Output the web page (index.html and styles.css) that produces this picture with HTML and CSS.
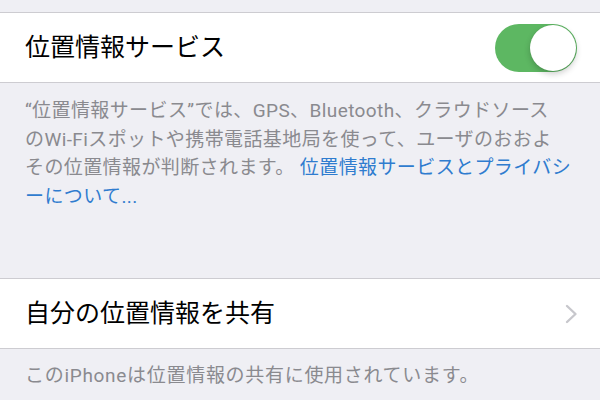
FILE: index.html
```html
<!DOCTYPE html>
<html lang="ja">
<head>
    <meta charset="UTF-8">
    <meta name="viewport" content="width=device-width, initial-scale=1.0">
    <title>位置情報サービス</title>
    <link rel="stylesheet" href="styles.css">
</head>
<body>
    <div class="group first">
        <div class="row">
            <span class="label">位置情報サービス</span>
            <span class="switch on"><span class="knob"></span></span>
        </div>
    </div>
    <p class="footer">
        “位置情報サービス”では、GPS、Bluetooth、クラウドソース<br>
        のWi-Fiスポットや携帯電話基地局を使って、ユーザのおおよ<br>
        その位置情報が判断されます。 <a href="#">位置情報サービスとプライバシ<br>ーについて...</a>
    </p>

    <div class="group second">
        <div class="row">
            <span class="label">自分の位置情報を共有</span>
            <svg class="chevron" width="13" height="20" viewBox="0 0 13 20">
                <path d="M2 2 L10.5 10 L2 18" fill="none" stroke="#c7c7cc" stroke-width="2.4" stroke-linecap="round" stroke-linejoin="round"/>
            </svg>
        </div>
    </div>
    <p class="footer small">このiPhoneは位置情報の共有に使用されています。</p>
</body>
</html>
```

FILE: styles.css
```css
body {
    margin: 0;
    background-color: #efeff4;
    font-family: Roboto, "Noto Sans CJK JP", sans-serif;
    color: #000;
}
.group {
    background: #fff;
    border-top: 1px solid #cdccd1;
    border-bottom: 1px solid #cdccd1;
}
.first {
    margin-top: 12px;
}
.second {
    margin-top: 67px;
}
.row {
    height: 69px;
    display: flex;
    align-items: center;
    justify-content: space-between;
    padding: 0 23px 0 25px;
}
.label {
    font-size: 25px;
    padding-bottom: 5px;
}
.switch {
    width: 82px;
    height: 48px;
    border-radius: 24px;
    background: #5db762;
    display: flex;
    align-items: center;
    justify-content: flex-end;
    padding: 1px;
    box-sizing: border-box;
}
.knob {
    width: 46px;
    height: 46px;
    border-radius: 50%;
    background: #fff;
    box-shadow: 0 3px 6px rgba(0, 0, 0, 0.2), 0 0 1px rgba(0, 0, 0, 0.15);
}
.chevron {
    margin-right: -1px;
}
.footer {
    margin: 0;
    padding: 14px 20px 0 25px;
    font-size: 19px;
    line-height: 28.5px;
    color: #8a8a8f;
    letter-spacing: 0.4px;
    white-space: nowrap;
}
.footer a {
    color: #2f7ccf;
    text-decoration: none;
}
.small {
    padding-top: 13px;
    letter-spacing: 0.7px;
}
```
